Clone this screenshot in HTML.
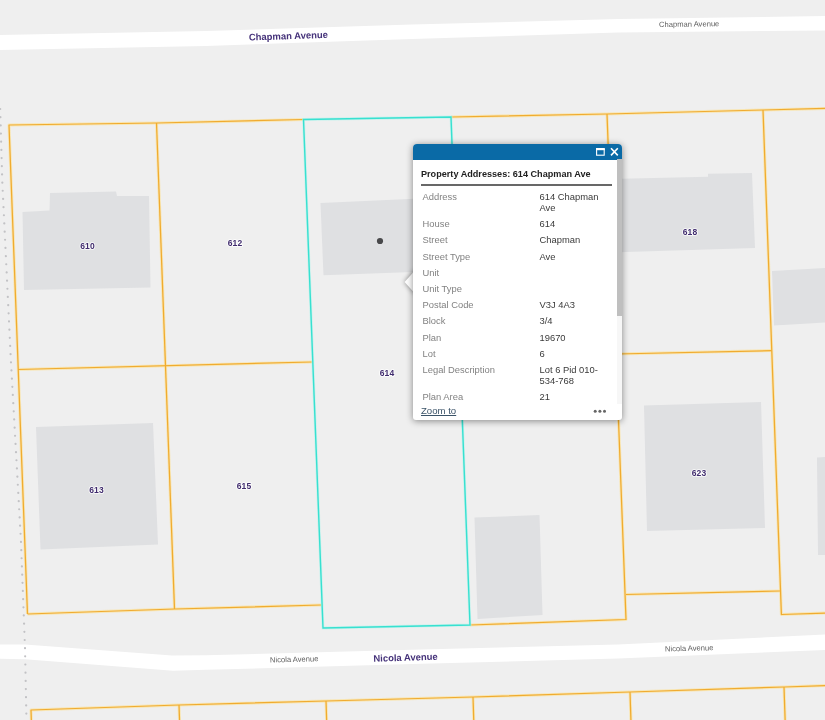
<!DOCTYPE html>
<html lang="en">
<head>
<meta charset="utf-8">
<title>Property Addresses: 614 Chapman Ave</title>
<style>
html,body{margin:0;padding:0;}
body{width:825px;height:720px;overflow:hidden;background:#efefef;position:relative;font-family:"Liberation Sans",sans-serif;}
#map{position:absolute;left:0;top:0;width:825px;height:720px;display:block;will-change:transform;}
.lbl{font-family:"Liberation Sans",sans-serif;font-weight:bold;font-size:8.5px;fill:#402c6e;stroke:#ffffff;stroke-opacity:0.9;stroke-width:1.7px;paint-order:stroke;stroke-linejoin:round;text-anchor:middle;letter-spacing:0.05px;}
.rd{font-family:"Liberation Sans",sans-serif;font-weight:bold;font-size:9.45px;fill:#45327a;stroke:#ffffff;stroke-width:1.2px;paint-order:stroke;stroke-linejoin:round;}
.rdg{font-family:"Liberation Sans",sans-serif;font-size:7.62px;fill:#5e5e5e;}
#popup{position:absolute;left:413px;top:144px;width:209px;height:276px;background:#fff;border-radius:4px 4px 3px 3px;box-shadow:0 1px 7px rgba(0,0,0,0.45);will-change:transform;}
#hdr{position:absolute;left:0;top:0;width:209px;height:15.8px;background:#0a6aa6;border-radius:4px 4px 0 0;}
#ttl{position:absolute;left:8px;top:23.6px;font-weight:bold;font-size:9.12px;line-height:12px;color:#222;white-space:nowrap;}
#hr{position:absolute;left:8px;top:40.4px;width:191px;height:1.2px;background:#686868;}
#sb{position:absolute;left:204px;top:15px;width:5px;height:245px;background:#f7f7f7;}
#th{position:absolute;left:204px;top:15px;width:5px;height:157px;background:#bfbfbf;}
.r{position:absolute;left:9.5px;font-size:9.4px;line-height:11px;color:#828282;white-space:nowrap;}
.v{position:absolute;left:126.5px;font-size:9.4px;line-height:11px;color:#3a3a3a;white-space:nowrap;}
#zoom{position:absolute;left:8px;top:261px;font-size:9.6px;line-height:12px;color:#3b5368;text-decoration:underline;}
#arrow{position:absolute;left:390px;top:260px;width:30px;height:44px;filter:drop-shadow(0 0 2.5px rgba(0,0,0,0.45));}
</style>
</head>
<body>
<svg id="map" width="825" height="720" viewBox="0 0 825 720">
<rect width="825" height="720" fill="#efefef"/>
<!-- roads -->
<polygon fill="#ffffff" points="0,35 206,31 412,24.5 618,19 825,16 825,30.5 618,32.5 412,39 206,46 0,50"/>
<polygon fill="#ffffff" points="0,644.6 25,644.5 172,655.5 206,655.3 412,649.7 618,644.5 825,634.5 825,650 618,658.5 412,664 206,669.8 173,670.8 25,659.2 0,658.8"/>
<!-- buildings -->
<g fill="#dfe0e2">
<polygon points="22.5,212 49.5,210.5 50,193 116,191.5 117,196 149,196 150.5,287.5 24,290"/>
<polygon points="36,427 153,423 158,544.5 40.5,549.5"/>
<polygon points="320.5,203 420,198.5 420,271.7 323.5,275.3"/>
<polygon points="610,179 708,176.8 708,173.7 752,173 755,248 610,252.5"/>
<polygon points="772,271 825,268 825,322.5 774,325.5"/>
<polygon points="644,405.5 761,402 765,528 647,531"/>
<polygon points="817,457.5 825,457 825,555 818,555"/>
<polygon points="474.5,517.5 539.5,515 542.5,615 477.5,619"/>
</g>
<!-- dotted line -->
<polyline fill="none" stroke="#c2c2c5" stroke-width="2.2" stroke-linecap="round" stroke-dasharray="0.01 8.168" points="0.2,109 2.3,182 10.75,358 20.9,540 25,648 26.3,712 26.5,722"/>
<!-- parcels orange -->
<defs><g id="parcels">
<polyline points="27.5,614 9,125 157,123 303.5,119.5"/>
<polyline points="156.5,123 174.5,609"/>
<polyline points="18,369.5 312,362"/>
<polyline points="27.5,614 175,609 321,605"/>
<polyline points="451,117 607,114 763,110 825,108.4"/>
<polyline points="607,114 626,619.5 470,625"/>
<polyline points="616,354 771.5,350.6"/>
<polyline points="763,110 781.4,614.5 825,613"/>
<polyline points="626,594.5 780,591"/>
<polyline points="31.4,722 31,710 179,705 326,701 473,697 630,692 784,687 825,685.5"/>
<polyline points="179,705 179.6,722"/>
<polyline points="326,701 326.7,722"/>
<polyline points="473,697 473.8,722"/>
<polyline points="630,692 631,722"/>
<polyline points="784,687 785.2,722"/>
</g></defs>
<use href="#parcels" fill="none" stroke="#fbe3a0" stroke-opacity="0.75" stroke-width="3" stroke-linejoin="round"/>
<use href="#parcels" fill="none" stroke="#f0ab30" stroke-width="1.25" stroke-linejoin="round"/>
<!-- selected parcel cyan -->
<polygon fill="none" stroke="#b8f3ec" stroke-opacity="0.7" stroke-width="2.8" points="303.5,119.5 451,117 470,625 323,628"/>
<polygon fill="none" stroke="#38e0d0" stroke-width="1.4" stroke-linejoin="miter" points="303.5,119.5 451,117 470,625 323,628"/>
<circle cx="380" cy="241" r="3.1" fill="#48484a"/>
<!-- labels -->
<text class="lbl" x="87.5" y="249.2">610</text>
<text class="lbl" x="235" y="246.2">612</text>
<text class="lbl" x="387" y="376.2">614</text>
<text class="lbl" x="690" y="235.2">618</text>
<text class="lbl" x="96.5" y="493.2">613</text>
<text class="lbl" x="244" y="489.2">615</text>
<text class="lbl" x="699" y="475.7">623</text>
<text class="rd" transform="translate(249,40.5) rotate(-1.95)">Chapman Avenue</text>
<text class="rd" transform="translate(373.5,661.8) rotate(-1.85)">Nicola Avenue</text>
<text class="rdg" transform="translate(659,27.0) rotate(-0.7)">Chapman Avenue</text>
<text class="rdg" transform="translate(270,662.5) rotate(-1.5)">Nicola Avenue</text>
<text class="rdg" transform="translate(665,651.5) rotate(-1.6)">Nicola Avenue</text>
</svg>

<svg id="arrow" width="30" height="44" viewBox="0 0 30 44"><polygon points="26,9.2 14.6,22 26,34.8" fill="#fff"/></svg>
<div id="popup">
  <div id="hdr">
    <svg width="209" height="15" viewBox="0 0 209 15" style="position:absolute;left:0;top:0">
      <rect x="183.6" y="5.2" width="7.6" height="6" fill="none" stroke="#fff" stroke-width="1.1"/>
      <rect x="183" y="4" width="8.8" height="2.2" fill="#fff"/>
      <path d="M198 4.2 L204.8 11.4 M204.8 4.2 L198 11.4" stroke="#fff" stroke-width="1.6" fill="none"/>
    </svg>
  </div>
  <div id="ttl">Property Addresses: 614 Chapman Ave</div>
  <div id="hr"></div>
  <div id="sb"></div><div id="th"></div>
  <div class="r" style="top:46.5px">Address</div><div class="v" style="top:46.5px">614 Chapman<br>Ave</div>
  <div class="r" style="top:74px">House</div><div class="v" style="top:74px">614</div>
  <div class="r" style="top:90px">Street</div><div class="v" style="top:90px">Chapman</div>
  <div class="r" style="top:106.5px">Street Type</div><div class="v" style="top:106.5px">Ave</div>
  <div class="r" style="top:122.5px">Unit</div>
  <div class="r" style="top:139px">Unit Type</div>
  <div class="r" style="top:155px">Postal Code</div><div class="v" style="top:155px">V3J 4A3</div>
  <div class="r" style="top:171px">Block</div><div class="v" style="top:171px">3/4</div>
  <div class="r" style="top:187.5px">Plan</div><div class="v" style="top:187.5px">19670</div>
  <div class="r" style="top:203.5px">Lot</div><div class="v" style="top:203.5px">6</div>
  <div class="r" style="top:220px">Legal Description</div><div class="v" style="top:220px">Lot 6 Pid 010-<br>534-768</div>
  <div class="r" style="top:247px">Plan Area</div><div class="v" style="top:247px">21</div>
  <div id="zoom">Zoom to</div>
  <svg width="16" height="6" viewBox="0 0 16 6" style="position:absolute;left:180px;top:264px">
    <circle cx="2.2" cy="3.3" r="1.5" fill="#666"/><circle cx="6.9" cy="3.3" r="1.5" fill="#666"/><circle cx="11.5" cy="3.3" r="1.5" fill="#666"/>
  </svg>
</div>
</body>
</html>
